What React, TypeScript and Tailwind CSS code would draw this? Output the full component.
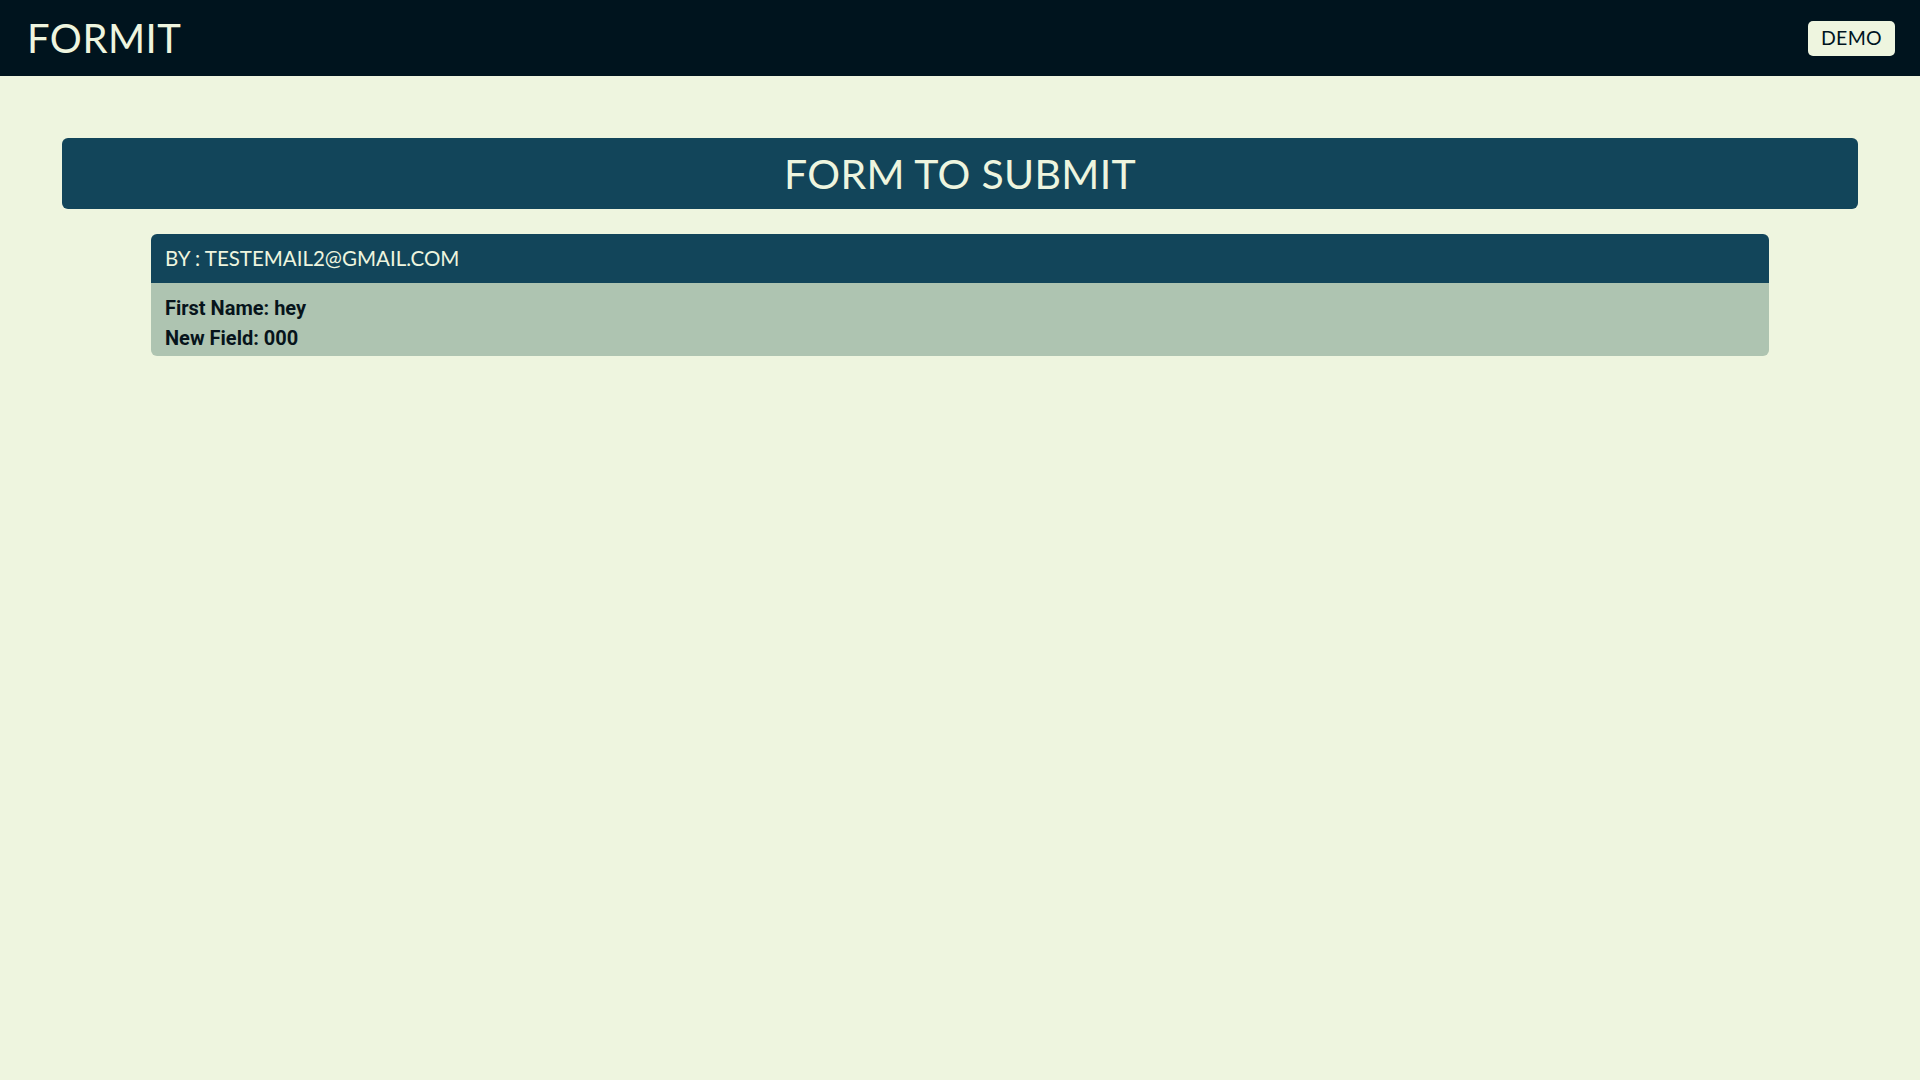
import React from "react";

export default function App() {
  return (
    <div className="min-h-[1080px] w-full bg-[#eef5df]">
      <header className="flex h-[76px] items-center justify-between bg-[#00141e] pl-[27px] pr-[25px]">
        <div className="font-['Lato',sans-serif] text-[40px] leading-none tracking-[0.5px] text-[#eef5df]">
          FORMIT
        </div>
        <button className="flex h-[35px] w-[87px] items-center justify-center rounded-[5px] bg-[#eef5df] font-['Lato',sans-serif] text-[19.5px] tracking-[0.3px] text-[#00141e]">
          DEMO
        </button>
      </header>
      <main className="px-[62px] pt-[62px]">
        <div className="flex h-[71px] items-center justify-center rounded-[6px] bg-[#12455a] font-['Lato',sans-serif] text-[41px] tracking-[0.3px] text-[#eef5df]">
          FORM TO SUBMIT
        </div>
        <div className="mx-[89px] mt-[25px]">
          <div className="flex h-[49px] items-center rounded-t-[6px] bg-[#12455a] px-[14px] font-['Lato',sans-serif] text-[20.5px] text-[#eef5df]">
            BY : TESTEMAIL2@GMAIL.COM
          </div>
          <div className="rounded-b-[6px] bg-[#aec4b1] px-[14px] pb-[3px] pt-[10px] font-['Roboto',sans-serif] text-[20px] font-bold leading-[30px] text-[#07141b]">
            <div>First Name: hey</div>
            <div>New Field: 000</div>
          </div>
        </div>
      </main>
    </div>
  );
}
